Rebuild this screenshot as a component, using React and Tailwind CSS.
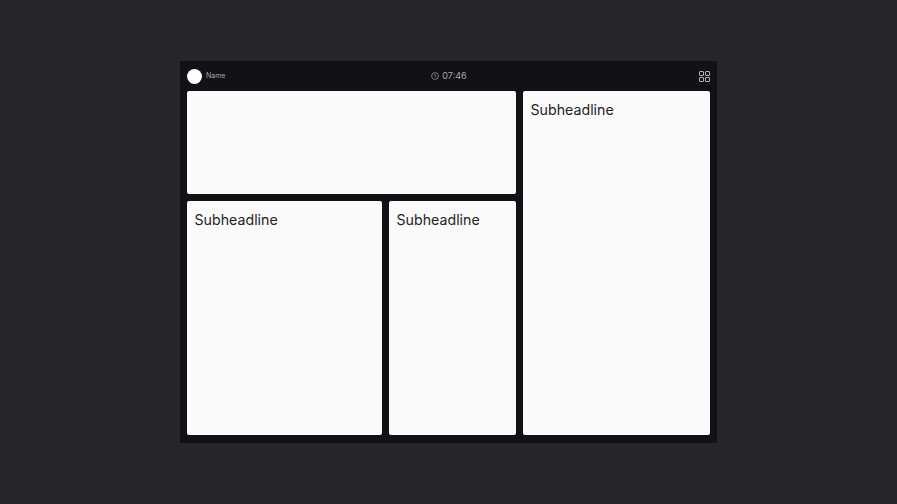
function Card({ title, className = '' }) {
  return (
    <div className={`bg-[#fafafa] rounded-[2px] px-[7.5px] pt-[8.5px] ${className}`}>
      {title && (
        <p className="text-[14.2px] leading-5 text-[#232326] font-['Inter',sans-serif]">{title}</p>
      )}
    </div>
  )
}

export default function App() {
  return (
    <div className="w-[897px] h-[504px] bg-[#262628] flex items-center justify-center font-['Inter',sans-serif]">
      <div className="w-[537px] h-[382px] bg-[#111116] px-[7px] pb-[8px] flex flex-col">
        <div className="h-[30px] shrink-0 grid grid-cols-3 items-center">
          <div className="flex items-center gap-[4px]">
            <div className="w-[15px] h-[15px] rounded-full bg-white" />
            <span className="text-[7px] text-[#a6a6aa]">Name</span>
          </div>
          <div className="flex items-center justify-center gap-[3px] text-[#a8a8ac] pl-[1px]">
            <svg width="8" height="8" viewBox="0 0 8 8" fill="none" stroke="currentColor" strokeWidth="0.7">
              <circle cx="4" cy="4" r="3.4" />
              <path d="M4 2v2.2l1.3.8" />
            </svg>
            <span className="text-[9px]">07:46</span>
          </div>
          <div className="flex justify-end">
            <svg width="11" height="11" viewBox="0 0 11 11" fill="none" stroke="#b4b4b8" strokeWidth="1">
              <rect x="0.5" y="0.5" width="4" height="4" rx="0.5" />
              <rect x="6.5" y="0.5" width="4" height="4" rx="0.5" />
              <rect x="0.5" y="6.5" width="4" height="4" rx="0.5" />
              <rect x="6.5" y="6.5" width="4" height="4" rx="0.5" />
            </svg>
          </div>
        </div>
        <div className="flex-1 flex gap-[7.5px] min-h-0">
          <div className="w-[328.5px] flex flex-col gap-[7.5px]">
            <Card className="h-[102.5px]" />
            <div className="flex-1 flex gap-[7px]">
              <Card title="Subheadline" className="w-[195px]" />
              <Card title="Subheadline" className="flex-1" />
            </div>
          </div>
          <Card title="Subheadline" className="flex-1" />
        </div>
      </div>
    </div>
  )
}
